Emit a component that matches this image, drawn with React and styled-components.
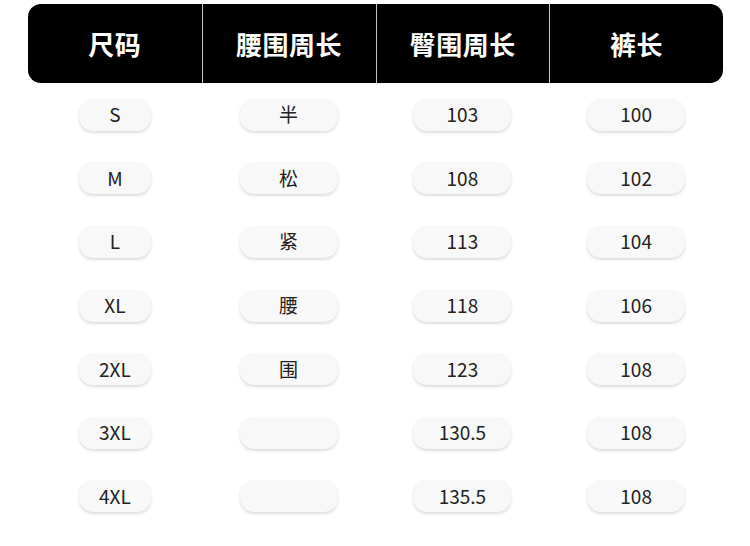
import React from "react";
import styled, { createGlobalStyle } from "styled-components";

const Global = createGlobalStyle`
  html, body { margin: 0; padding: 0; background: #fff; }
  body { font-family: "Noto Sans CJK SC", "Noto Sans", sans-serif; }
`;

const Page = styled.div`
  width: 750px;
  height: 546px;
  padding: 4px 27px 0 28px;
  box-sizing: border-box;
`;

const Header = styled.div`
  display: grid;
  grid-template-columns: repeat(4, 1fr);
  height: 79px;
  background: #000;
  border-radius: 13px;
  overflow: hidden;
`;

const HeadCell = styled.div`
  display: flex;
  align-items: center;
  justify-content: center;
  color: #fff;
  font-size: 26px;
  font-weight: 700;
  letter-spacing: 0.5px;
  border-left: ${(p) => (p.$first ? "none" : "1px solid #c4c4c4")};
`;

const Row = styled.div`
  display: grid;
  grid-template-columns: repeat(4, 1fr);
  height: 63.6px;
  align-items: center;
  justify-items: center;
`;

const Pill = styled.div`
  width: ${(p) => (p.$narrow ? "72px" : "98px")};
  height: 32px;
  border-radius: 14px;
  background: #f8f8f8;
  box-shadow: 0 2px 3px rgba(0, 0, 0, 0.13), 0 0 1px rgba(0, 0, 0, 0.05);
  display: flex;
  align-items: center;
  justify-content: center;
  padding-bottom: 2px;
  box-sizing: border-box;
  color: #222;
  font-size: 19px;
  line-height: 1;
`;

const heads = ["尺码", "腰围周长", "臀围周长", "裤长"];
const rows = [
  ["S", "半", "103", "100"],
  ["M", "松", "108", "102"],
  ["L", "紧", "113", "104"],
  ["XL", "腰", "118", "106"],
  ["2XL", "围", "123", "108"],
  ["3XL", "", "130.5", "108"],
  ["4XL", "", "135.5", "108"],
];

export default function App() {
  return (
    <>
      <Global />
      <Page>
        <Header>
          {heads.map((h, i) => (
            <HeadCell key={h} $first={i === 0}>
              {h}
            </HeadCell>
          ))}
        </Header>
        {rows.map((r, ri) => (
          <Row key={ri}>
            {r.map((c, ci) => (
              <Pill key={ci} $narrow={ci === 0}>
                {c}
              </Pill>
            ))}
          </Row>
        ))}
      </Page>
    </>
  );
}
